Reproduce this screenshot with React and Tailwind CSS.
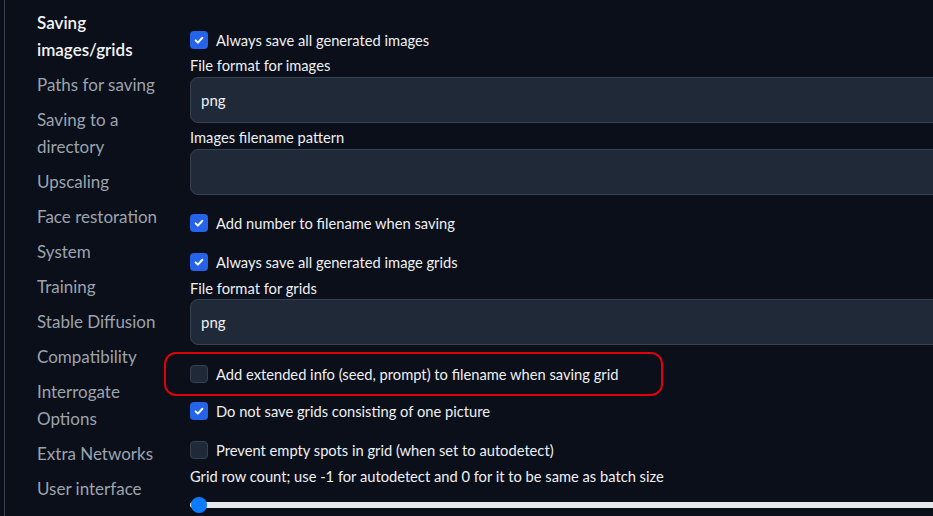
const sections = [
  { label: 'Saving images/grids', active: true },
  { label: 'Paths for saving' },
  { label: 'Saving to a directory' },
  { label: 'Upscaling' },
  { label: 'Face restoration' },
  { label: 'System' },
  { label: 'Training' },
  { label: 'Stable Diffusion' },
  { label: 'Compatibility' },
  { label: 'Interrogate Options' },
  { label: 'Extra Networks' },
  { label: 'User interface' },
];

const Checkbox = ({ checked, label, className = '' }) => (
  <label className={`flex items-center gap-2 h-5 ${className}`}>
    <span
      className={`w-[18px] h-[18px] rounded-[4px] flex items-center justify-center shrink-0 ${
        checked ? 'bg-[#2563eb]' : 'bg-[#1f2937] border border-[#374151]'
      }`}
    >
      {checked && (
        <svg className="w-3 h-3 text-white" viewBox="0 0 16 16" fill="none" stroke="currentColor">
          <path strokeLinecap="round" strokeLinejoin="round" strokeWidth={2.6} d="M3.5 8.5l3 3 6-6.5" />
        </svg>
      )}
    </span>
    <span className="text-[14.7px] text-[#eef0f3] whitespace-nowrap">{label}</span>
  </label>
);

const FieldLabel = ({ children, className = '' }) => (
  <div className={`text-[14.7px] leading-5 text-[#eef0f3] whitespace-nowrap ${className}`}>{children}</div>
);

const TextBox = ({ value, className = '' }) => (
  <div
    className={`w-[800px] h-[46px] shrink-0 rounded-lg bg-[#1f2937] border border-[#374151] flex items-center px-[10px] text-[15px] text-[#eef0f3] ${className}`}
  >
    {value}
  </div>
);

export default function App() {
  return (
    <div
      className="w-[933px] h-[516px] overflow-hidden bg-[#0b0f19] flex"
      style={{ fontFamily: 'Lato, "Liberation Sans", sans-serif' }}
    >
      {/* Sidebar */}
      <div className="w-[190px] shrink-0 pl-1">
        <div className="h-full border-l border-[#374151] pl-8 pr-2 pt-[5px]">
          {sections.map((s) => (
            <div
              key={s.label}
              className={`py-1 text-[17px] leading-[27px] ${
                s.active ? 'text-[#f3f4f6] font-semibold' : 'text-[#9ca3af]'
              }`}
            >
              {s.label}
            </div>
          ))}
        </div>
      </div>

      {/* Settings */}
      <div className="flex-1 flex flex-col pt-[30px] min-w-0">
        <Checkbox checked label="Always save all generated images" />
        <FieldLabel className="mt-[5px]">File format for images</FieldLabel>
        <TextBox value="png" className="mt-[2px]" />
        <FieldLabel className="mt-[4px]">Images filename pattern</FieldLabel>
        <TextBox value="" className="mt-[2px]" />
        <Checkbox checked label="Add number to filename when saving" className="mt-[18px]" />
        <Checkbox checked label="Always save all generated image grids" className="mt-[19px]" />
        <FieldLabel className="mt-[6px]">File format for grids</FieldLabel>
        <TextBox value="png" className="mt-[1px]" />
        <div className="mt-[7px] -ml-[26px] w-[499px] h-[44px] rounded-[12px] border-2 border-[#e0000b] flex items-center pl-[24px]">
          <Checkbox label="Add extended info (seed, prompt) to filename when saving grid" />
        </div>
        <Checkbox checked label="Do not save grids consisting of one picture" className="mt-[5px]" />
        <Checkbox label="Prevent empty spots in grid (when set to autodetect)" className="mt-[19px]" />
        <FieldLabel className="mt-[6px]">Grid row count; use -1 for autodetect and 0 for it to be same as batch size</FieldLabel>
        <div className="mt-[11px] relative h-4 w-[800px] flex items-center">
          <div className="w-full h-[6px] rounded-full bg-[#e5e7eb]" />
          <div className="absolute left-[1px] top-0 w-4 h-4 rounded-full bg-[#0b7bff]" />
        </div>
      </div>
    </div>
  );
}
